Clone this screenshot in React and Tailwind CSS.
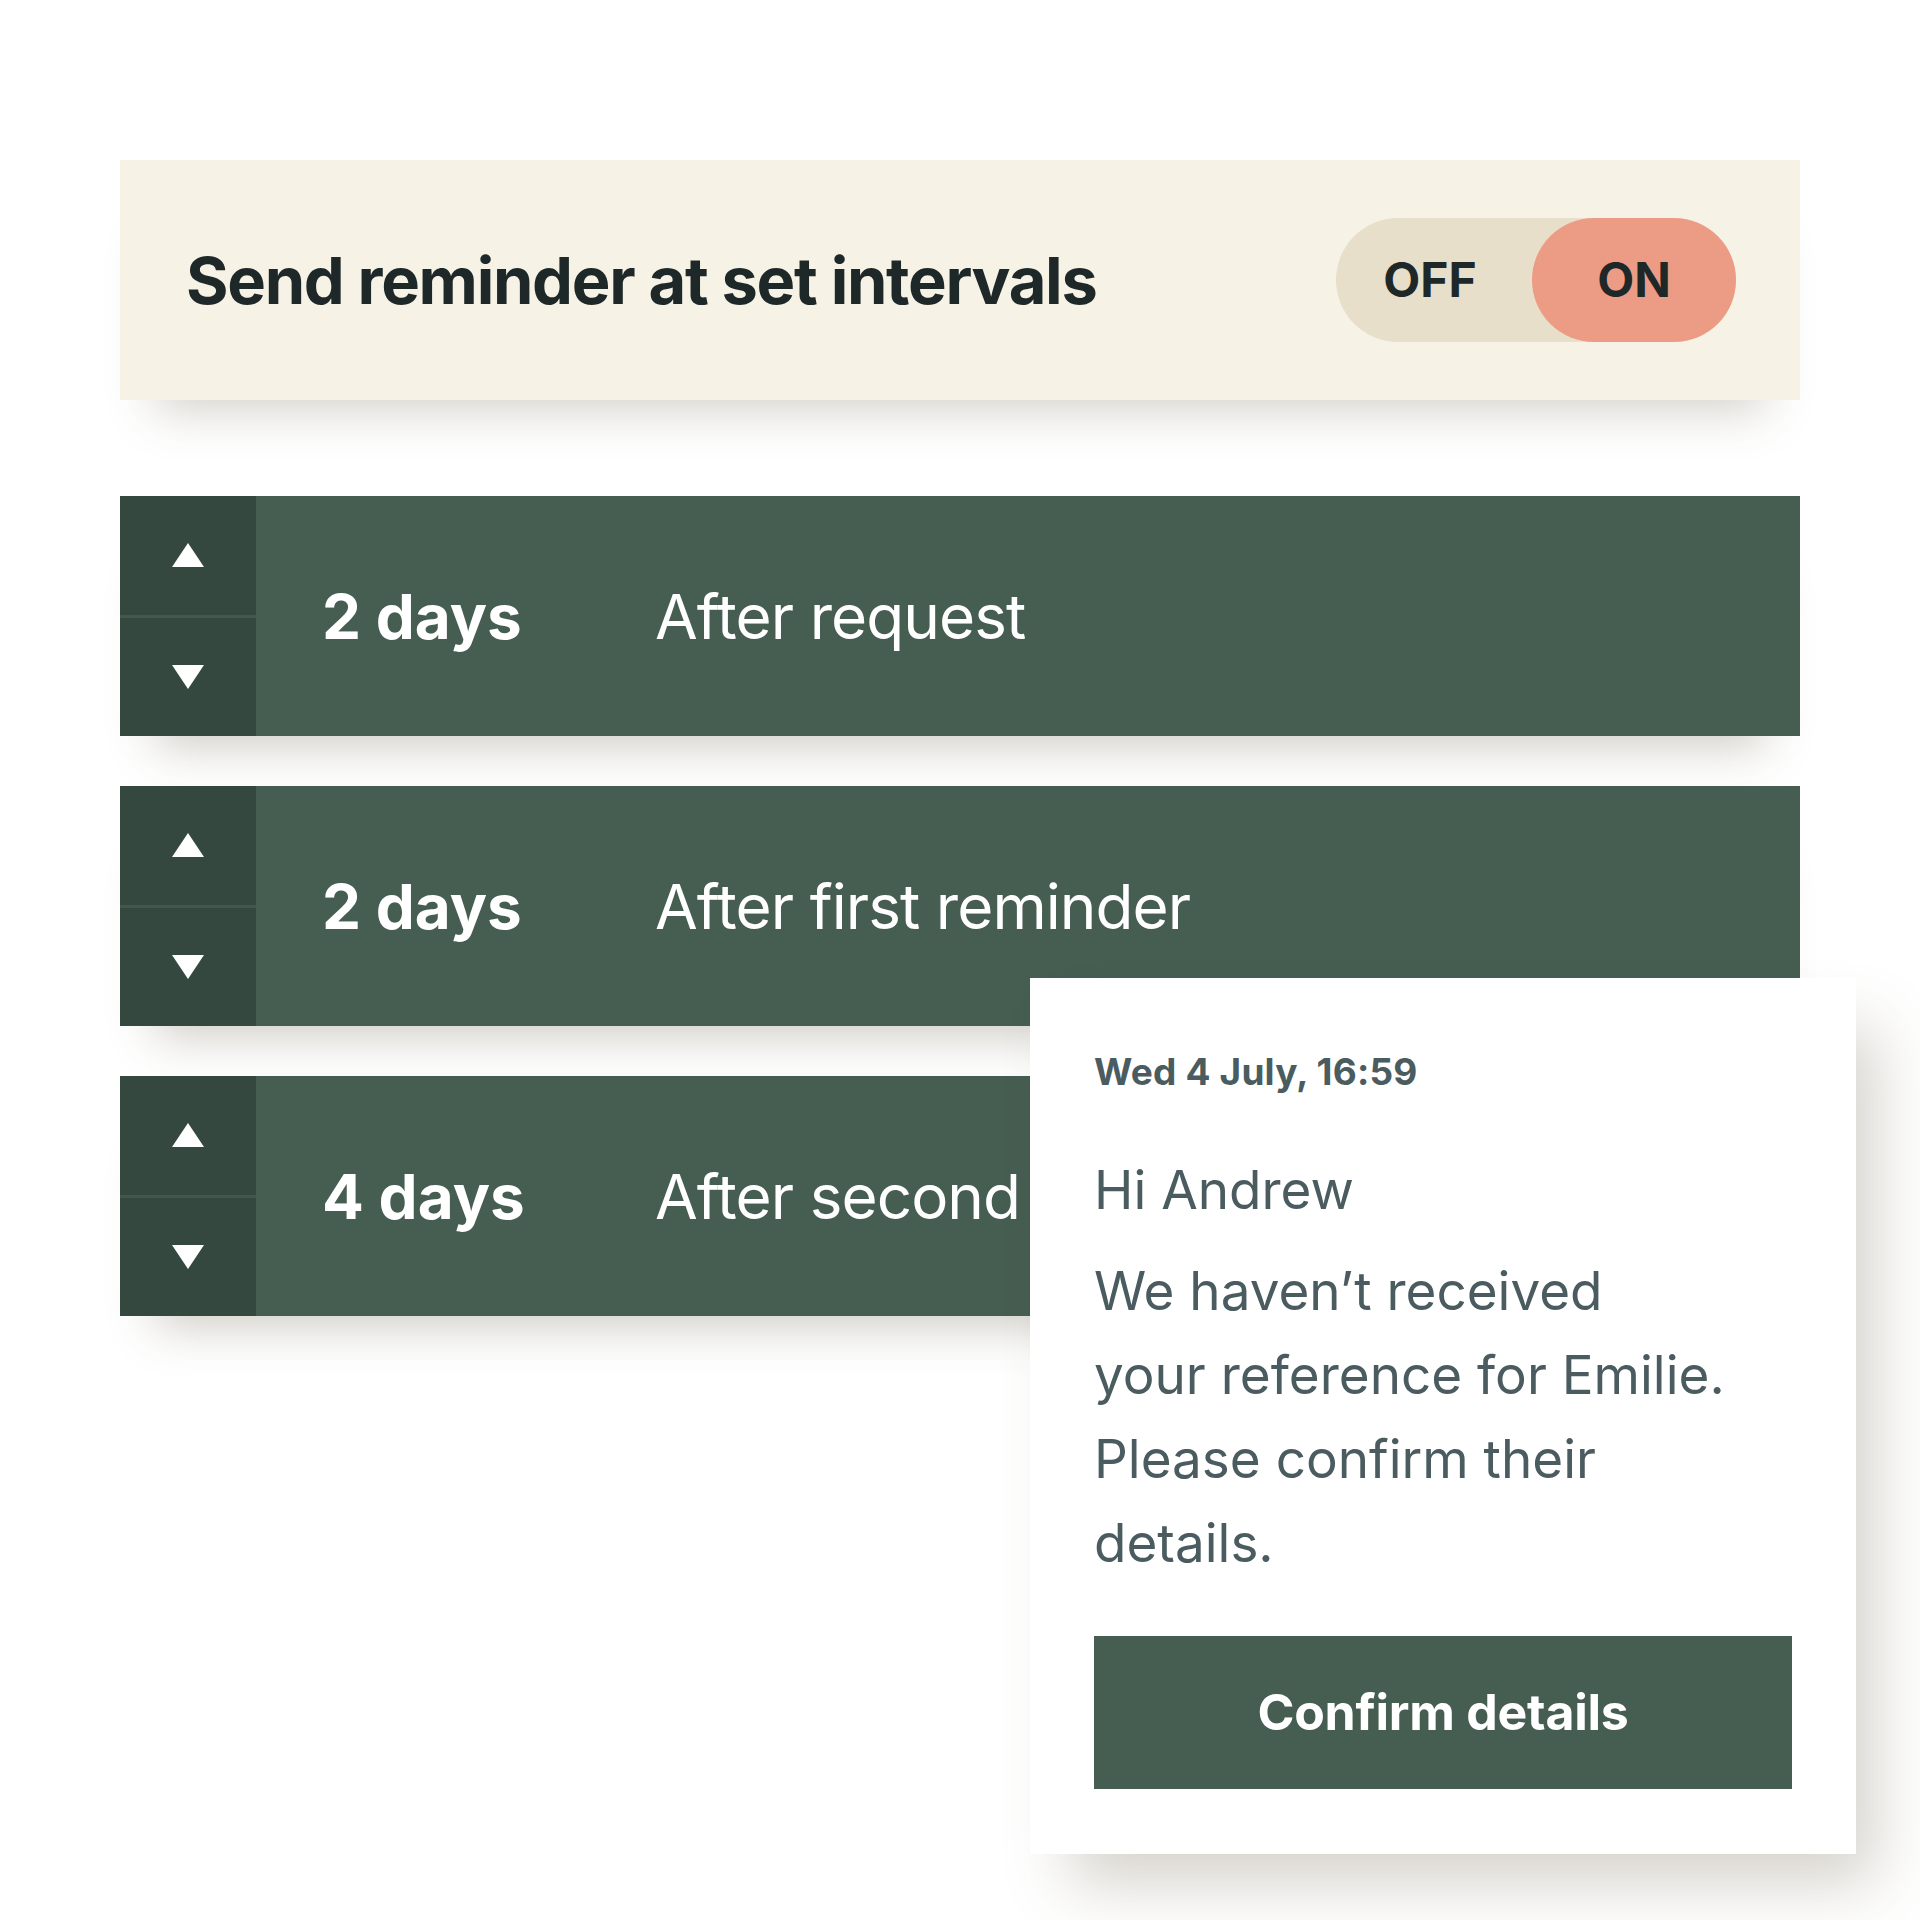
import React from "react";

function Up() {
  return (
    <svg width="32" height="24" viewBox="0 0 32 24">
      <polygon points="16,0 32,24 0,24" fill="#ffffff" />
    </svg>
  );
}
function Down() {
  return (
    <svg width="32" height="24" viewBox="0 0 32 24">
      <polygon points="0,0 32,0 16,24" fill="#ffffff" />
    </svg>
  );
}

function Row({ num, label, clip }) {
  return (
    <div className="flex h-[240px] bg-[#465D51] shadow-[0_45px_45px_-35px_rgba(80,70,40,0.28)]">
      <div className="flex w-[136px] flex-col bg-[#34483F]">
        <div className="flex flex-1 items-center justify-center">
          <Up />
        </div>
        <div className="h-[3px] bg-[#43584D]" />
        <div className="flex flex-1 items-center justify-center">
          <Down />
        </div>
      </div>
      <div className="flex flex-1 items-center pl-[66px] text-white">
        <div className="w-[333px] text-[62px] font-bold tracking-[0em]">{num}</div>
        <div
          className={
            clip
              ? "w-[372px] overflow-hidden whitespace-nowrap text-[62px] font-normal tracking-[-0.015em]"
              : "whitespace-nowrap text-[62px] font-normal tracking-[-0.015em]"
          }
        >
          {label}
        </div>
      </div>
    </div>
  );
}

export default function App() {
  return (
    <div
      className="relative h-[1920px] w-[1920px] overflow-hidden bg-white"
      style={{ fontFamily: "Inter, 'Noto Sans', sans-serif" }}
    >
      <div className="w-[1800px] pl-[120px] pt-[160px]">
        <div className="flex h-[240px] items-center justify-between bg-[#F6F2E6] pl-[66px] pr-[64px] shadow-[0_45px_45px_-35px_rgba(80,70,40,0.25)]">
          <div className="text-[65px] font-bold leading-none tracking-[-0.02em] text-[#1F2828]">
            Send reminder at set intervals
          </div>
          <div className="flex h-[124px] w-[400px] items-stretch rounded-full bg-[#E7DFC9] text-[48px] font-bold text-[#1F2828]">
            <div className="flex flex-1 items-center justify-center pr-[8px]">OFF</div>
            <div className="flex w-[204px] items-center justify-center rounded-full bg-[#EC9C84]">ON</div>
          </div>
        </div>

        <div className="mt-[96px] flex flex-col gap-[50px]">
          <Row num="2 days" label="After request" />
          <Row num="2 days" label="After first reminder" />
          <Row num="4 days" label="After second reminder" clip />
        </div>
      </div>

      <div className="absolute left-[1030px] top-[978px] w-[826px] bg-white px-[64px] pb-[65px] pt-[72px] text-[#4A5C60] shadow-[30px_40px_60px_-10px_rgba(90,80,50,0.25)]">
        <div className="text-[37px] font-bold leading-[44px] tracking-[0.005em]">Wed 4 July, 16:59</div>
        <div className="mt-[54px] text-[53px] leading-[84px] tracking-[0em]">Hi Andrew</div>
        <div className="mt-[17px] text-[53px] leading-[84px] tracking-[0em]">
          We haven’t received
          <br />
          your reference for Emilie.
          <br />
          Please confirm their
          <br />
          details.
        </div>
        <button className="mt-[51px] flex h-[153px] w-full items-center justify-center bg-[#465D51] text-[50px] font-bold tracking-[-0.005em] text-white">
          Confirm details
        </button>
      </div>
    </div>
  );
}
